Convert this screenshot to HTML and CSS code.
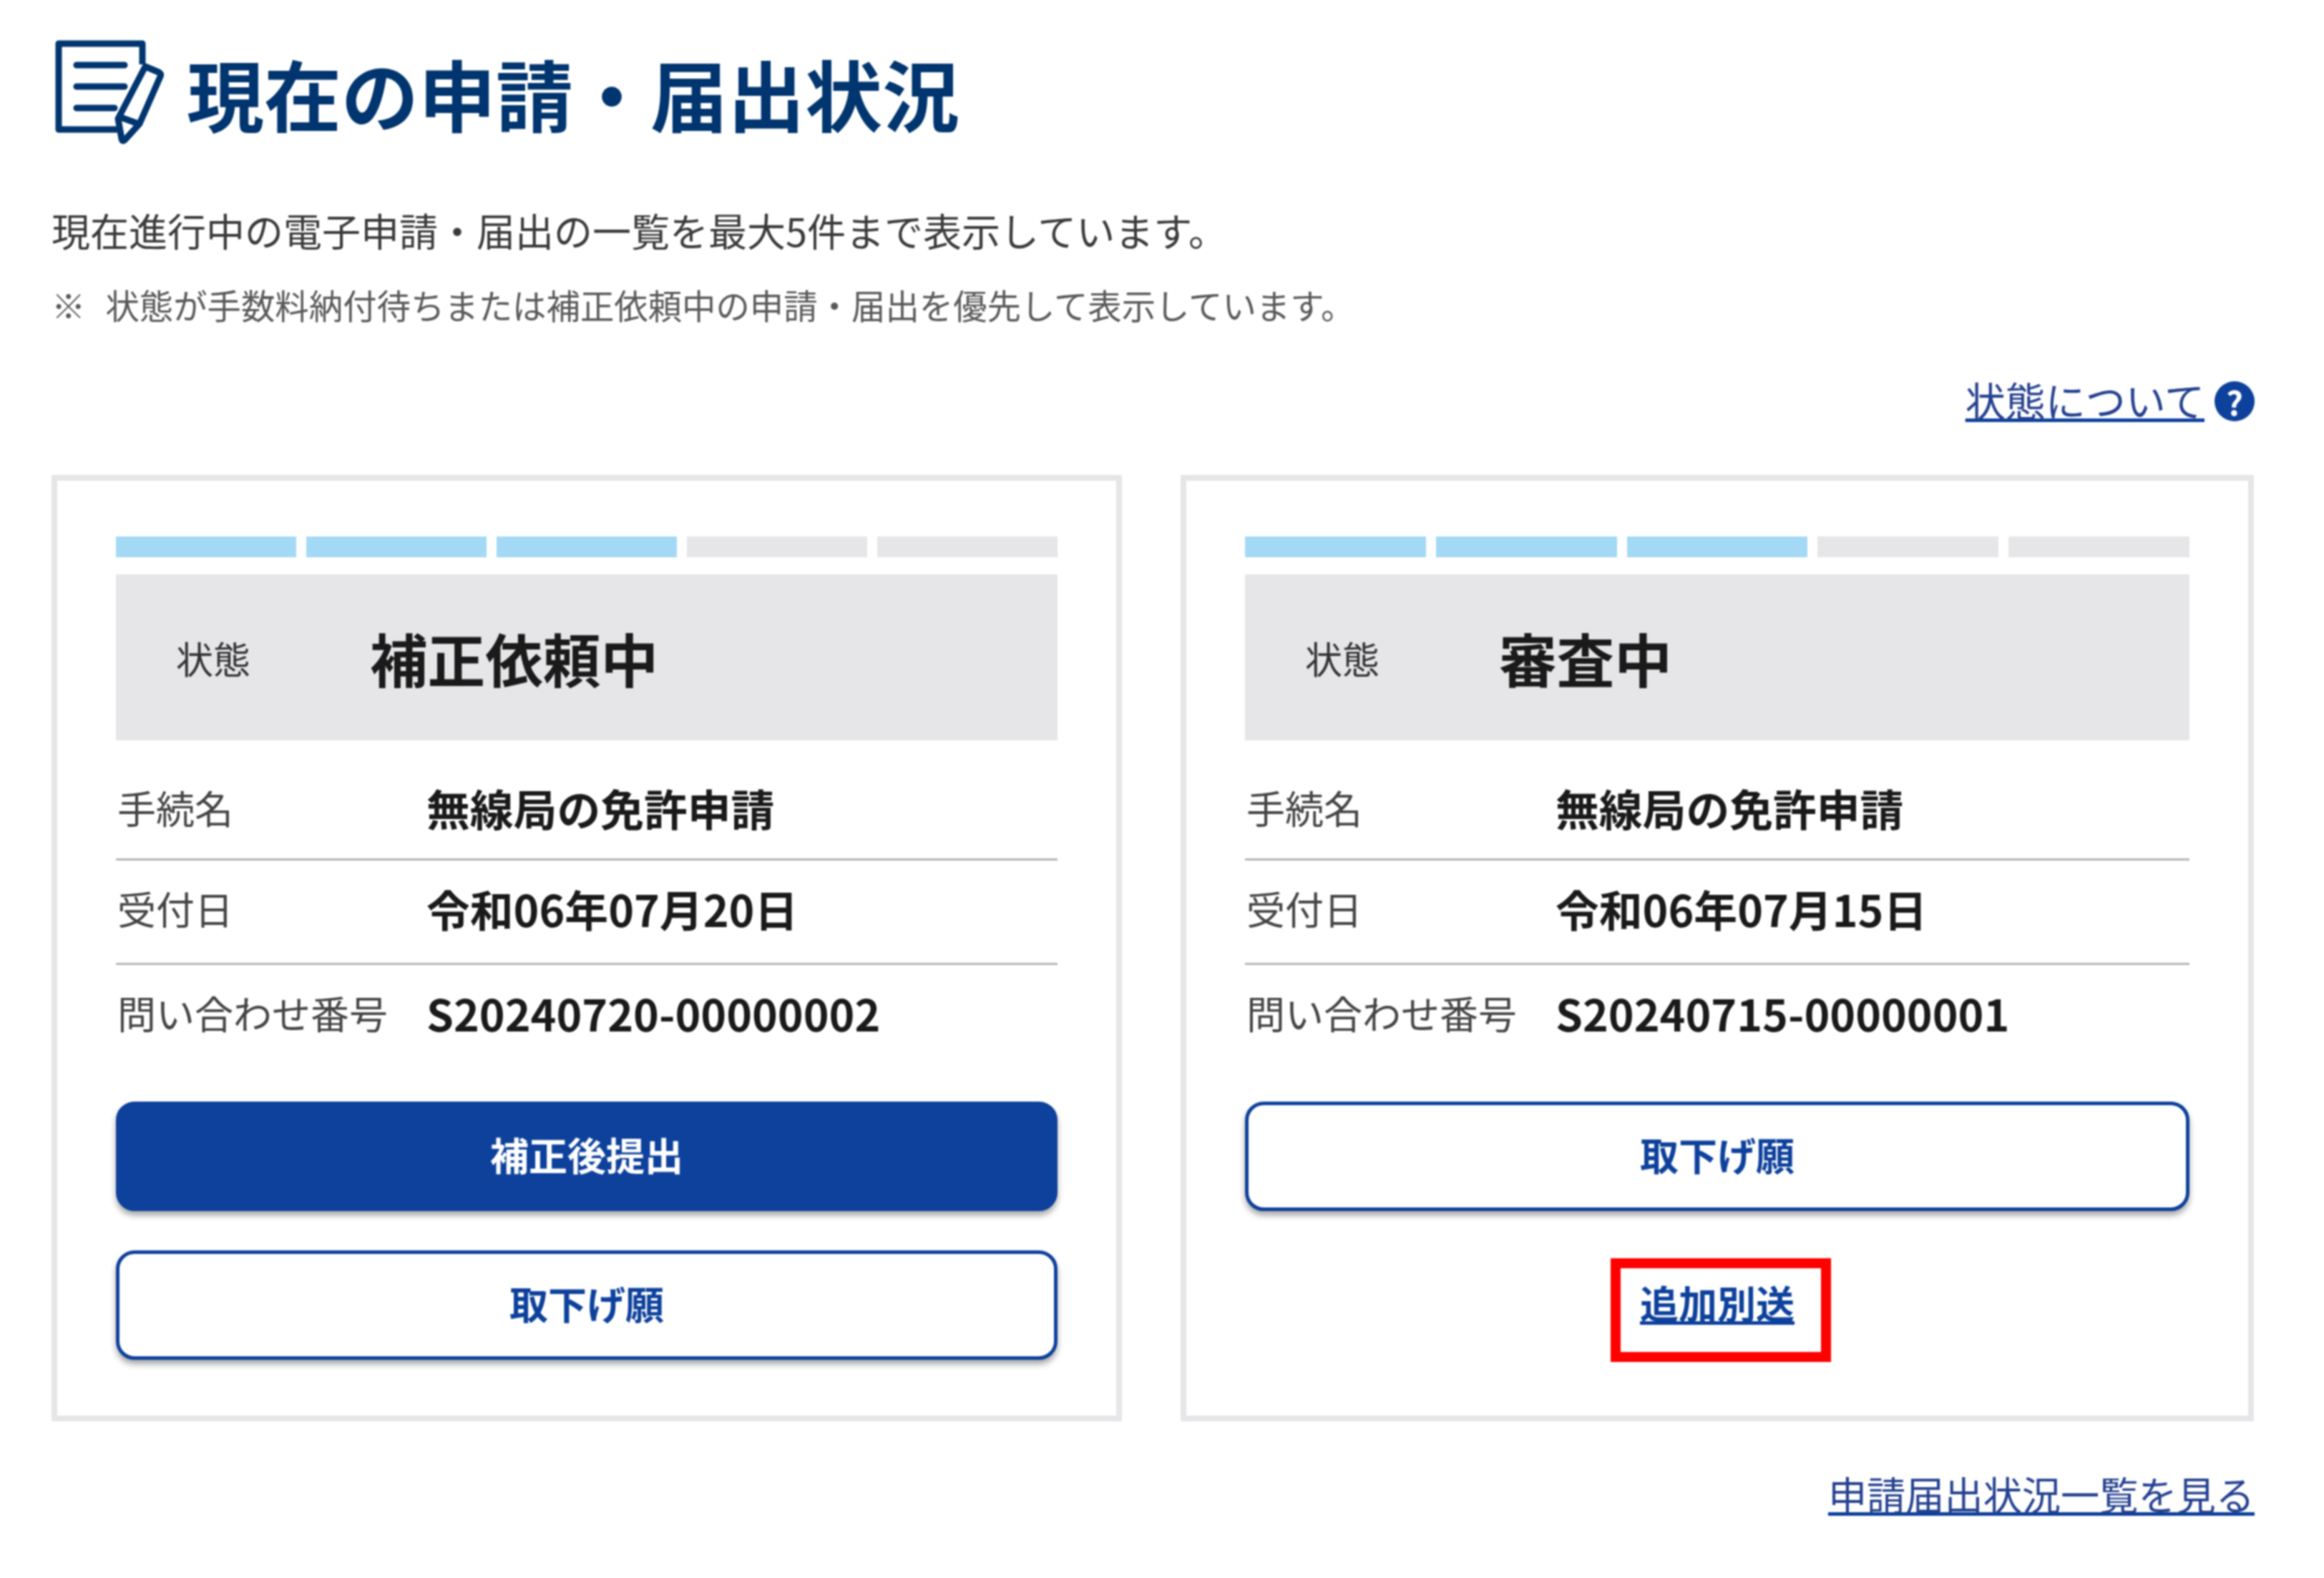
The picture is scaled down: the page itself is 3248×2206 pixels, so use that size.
FILE: index.html
```html
<!DOCTYPE html>
<html lang="ja">
<head>
    <meta charset="UTF-8" />
    <title>現在の申請・届出状況</title>
    <link rel="stylesheet" href="styles.css">
</head>
<body>
    <main class="page">
        <header class="title">
            <svg class="title-icon" viewBox="0 0 152 148" fill="none" stroke="#00356f" stroke-width="9" stroke-linejoin="round">
                <path d="M88 125H5V5H122V34"/>
                <path stroke-linecap="round" d="M30 35H97M30 65H97M30 95H83"/>
                <path d="M126 37L145 45Q149 47 147 51L118 117L98 139Q94 143 93 138L88 110Z"/>
                <path d="M89 107L119 118"/>
            </svg>
            <h1>現在の申請・届出状況</h1>
        </header>

        <p class="lead">現在進行中の電子申請・届出の一覧を最大5件まで表示しています。</p>
        <p class="note"><span class="note-mark">※</span>状態が手数料納付待ちまたは補正依頼中の申請・届出を優先して表示しています。</p>

        <div class="help-row">
            <a class="link link-help" href="#">状態について</a>
            <span class="help-icon">?</span>
        </div>

        <div class="cards">
            <section class="card">
                <div class="steps">
                    <span class="step done"></span>
                    <span class="step done"></span>
                    <span class="step done"></span>
                    <span class="step"></span>
                    <span class="step"></span>
                </div>
                <div class="status">
                    <span class="status-label">状態</span>
                    <strong class="status-value">補正依頼中</strong>
                </div>
                <div class="row row-first">
                    <span class="row-label">手続名</span>
                    <span class="row-value">無線局の免許申請</span>
                </div>
                <div class="row">
                    <span class="row-label">受付日</span>
                    <span class="row-value">令和06年07月20日</span>
                </div>
                <div class="row row-last">
                    <span class="row-label">問い合わせ番号</span>
                    <span class="row-value">S20240720-00000002</span>
                </div>
                <div class="actions">
                    <button class="btn btn-primary">補正後提出</button>
                    <button class="btn">取下げ願</button>
                </div>
            </section>

            <section class="card">
                <div class="steps">
                    <span class="step done"></span>
                    <span class="step done"></span>
                    <span class="step done"></span>
                    <span class="step"></span>
                    <span class="step"></span>
                </div>
                <div class="status">
                    <span class="status-label">状態</span>
                    <strong class="status-value">審査中</strong>
                </div>
                <div class="row row-first">
                    <span class="row-label">手続名</span>
                    <span class="row-value">無線局の免許申請</span>
                </div>
                <div class="row">
                    <span class="row-label">受付日</span>
                    <span class="row-value">令和06年07月15日</span>
                </div>
                <div class="row row-last">
                    <span class="row-label">問い合わせ番号</span>
                    <span class="row-value">S20240715-00000001</span>
                </div>
                <div class="actions">
                    <button class="btn">取下げ願</button>
                    <div class="extra">
                        <a class="extra-link" href="#">追加別送</a>
                    </div>
                </div>
            </section>
        </div>

        <div class="list-row">
            <a class="link link-list" href="#">申請届出状況一覧を見る</a>
        </div>
    </main>
</body>
</html>
```

FILE: styles.css
```css
body {
    margin: 0;
    background: #fff;
    color: #333;
    font-family: "Noto Sans CJK JP", "Noto Sans", sans-serif;
}

/* the reference is a soft, upscaled capture */
.page {
    padding: 56px 97px 0 72px;
    filter: blur(1px);
}

.title {
    display: flex;
    padding-left: 5px;
    height: 148px;
}

.title-icon {
    width: 152px;
    height: 148px;
    flex: none;
}

.title h1 {
    margin: 0 0 0 32px;
    font-size: 108px;
    line-height: 146px;
    font-weight: 700;
    color: #00356f;
}

.lead {
    margin: 78px 0 0;
    font-size: 54px;
    line-height: 80px;
    color: #3a3a3a;
}

.note {
    margin: 29px 0 0;
    font-size: 47.4px;
    line-height: 70px;
    color: #595959;
}

.note-mark {
    margin-right: 28px;
}

.help-row {
    display: flex;
    justify-content: flex-end;
    align-items: center;
    gap: 14px;
    margin-top: 65px;
    height: 70px;
}

.link {
    line-height: 70px;
    color: #24408f;
    text-decoration-color: #0e419c;
}

.link-help {
    position: relative;
    top: -3px;
    font-size: 56px;
}

.link-list {
    font-size: 54.2px;
}

.help-icon {
    display: flex;
    justify-content: center;
    align-items: center;
    width: 56px;
    height: 56px;
    border-radius: 50%;
    background: #0e419c;
    color: #fff;
    font-size: 46px;
    font-weight: 700;
    line-height: 1;
}

.cards {
    display: grid;
    grid-template-columns: 1496px 1500px;
    gap: 82px;
    margin-top: 68px;
}

.card {
    border: 8px solid #e6e6e9;
    padding: 78px 82px;
}

.steps {
    display: flex;
    gap: 14px;
    height: 29px;
}

.step {
    flex: 1;
    background: #e6e6e9;
}

.step.done {
    background: #a3d9f5;
}

.status {
    display: flex;
    align-items: center;
    height: 232px;
    margin-top: 24px;
    margin-bottom: 22px;
    background: #e6e6e9;
}

.status-label {
    width: 270px;
    padding-left: 84px;
    font-size: 52px;
    color: #333;
    flex: none;
    box-sizing: border-box;
}

.status-value {
    margin-left: 85px;
    font-size: 80.6px;
    color: #1a1a1a;
}

.row {
    display: flex;
    align-items: center;
    height: 133px;
    padding-bottom: 10px;
    border-bottom: 3px solid #b5b5b5;
}

.row-first {
    height: 124px;
    padding-top: 9px;
}

.row-last {
    border-bottom: none;
}

.row-label {
    width: 434px;
    flex: none;
    font-size: 54px;
    color: #444;
    box-sizing: border-box;
    padding-left: 2px;
}

.row-value {
    font-size: 60.8px;
    font-weight: 700;
    color: #1a1a1a;
}

.actions {
    display: flex;
    flex-direction: column;
    gap: 55px;
    margin-top: 48px;
}

.btn {
    height: 153px;
    padding-bottom: 8px;
    border: 5px solid #0e419c;
    border-radius: 26px;
    background: #fff;
    box-shadow: 0 6px 9px rgba(0, 0, 0, 0.35);
    color: #0e419c;
    font-family: inherit;
    font-size: 54px;
    font-weight: 700;
}

.btn-primary {
    background: #0e419c;
    color: #fff;
}

.extra {
    display: flex;
    justify-content: center;
    align-items: center;
    height: 153px;
    padding-bottom: 8px;
    box-sizing: border-box;
}

.extra-link {
    position: relative;
    font-size: 54px;
    font-weight: 700;
    line-height: 60px;
    color: #0e419c;
}

/* red annotation box drawn over the link */
.extra-link::after {
    content: "";
    position: absolute;
    top: -32px;
    bottom: -53px;
    left: -41px;
    right: -51px;
    border: 14px solid #f00;
}

.list-row {
    display: flex;
    justify-content: flex-end;
    margin-top: 66px;
}
```
